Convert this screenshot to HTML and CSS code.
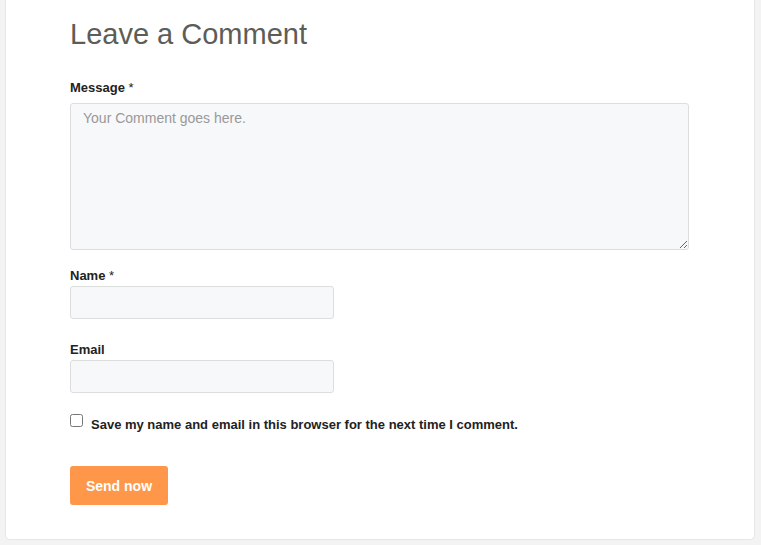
FILE: index.html
```html
<!DOCTYPE html>
<html lang="en">
<head>
<meta charset="utf-8">
<title>Leave a Comment</title>
<link rel="stylesheet" href="styles.css">
</head>
<body>
<div class="card">
  <h2 class="title">Leave a Comment</h2>
  <form class="form">
    <div class="field field-message">
      <label class="label label-message" for="msg">Message <span class="req">*</span></label>
      <textarea id="msg" class="textarea" placeholder="Your Comment goes here."></textarea>
    </div>
    <div class="field field-name">
      <label class="label" for="name">Name <span class="req">*</span></label>
      <input id="name" class="input" type="text">
    </div>
    <div class="field field-email">
      <label class="label" for="email">Email</label>
      <input id="email" class="input" type="email">
    </div>
    <div class="consent">
      <input id="save" class="check" type="checkbox">
      <label for="save" class="consent-text">Save my name and email in this browser for the next time I comment.</label>
    </div>
    <button type="button" class="btn">Send now</button>
  </form>
</div>
</body>
</html>
```

FILE: styles.css
```css
html, body {
  margin: 0;
  padding: 0;
}
body {
  background: #f2f3f2;
  font-family: "Liberation Sans", Arial, sans-serif;
  color: #222;
}
.card {
  margin: 0 6px 0 5px;
  height: 540px;
  box-sizing: border-box;
  background: #fff;
  border: 1px solid #e4e5e4;
  border-top: none;
  border-radius: 0 0 5px 5px;
  padding: 16px 0 0 64px;
}
.title {
  margin: 0;
  font-size: 29px;
  line-height: 36px;
  font-weight: 400;
  color: #5d5d58;
}
.form {
  display: flex;
  flex-direction: column;
  margin-top: 26px;
}
.field {
  display: flex;
  flex-direction: column;
}
.label {
  font-size: 13px;
  line-height: 20px;
  font-weight: 700;
  color: #222;
  margin-bottom: 0;
}
.label-message {
  margin-bottom: 5px;
}
.req {
  font-weight: 400;
}
.textarea {
  width: 619px;
  height: 147px;
  box-sizing: border-box;
  border: 1px solid #dcdddd;
  border-radius: 3px;
  background: #f7f8f9;
  padding: 5px 12px;
  font-family: "Liberation Sans", Arial, sans-serif;
  font-size: 14px;
  line-height: 18px;
  color: #333;
  margin: 0;
  resize: vertical;
}
.textarea::placeholder {
  color: #999;
}
.field-name {
  margin-top: 16px;
}
.field-email {
  margin-top: 21px;
}
.input {
  width: 264px;
  height: 33px;
  box-sizing: border-box;
  border: 1px solid #dcdddd;
  border-radius: 3px;
  background: #f7f8f9;
  margin: 0;
  padding: 0 10px;
  font-size: 14px;
}
.consent {
  display: flex;
  align-items: flex-start;
  margin-top: 23px;
}
.check {
  width: 13px;
  height: 13px;
  margin: -2px 8px 0 0;
}
.consent-text {
  font-size: 13px;
  line-height: 18px;
  font-weight: 700;
  color: #222;
}
.btn {
  align-self: flex-start;
  margin-top: 32px;
  width: 98px;
  height: 39px;
  border: none;
  border-radius: 3px;
  background: #ff974a;
  color: #fff;
  font-family: "Liberation Sans", Arial, sans-serif;
  font-size: 14px;
  font-weight: 700;
  padding: 0;
  cursor: pointer;
}
```
